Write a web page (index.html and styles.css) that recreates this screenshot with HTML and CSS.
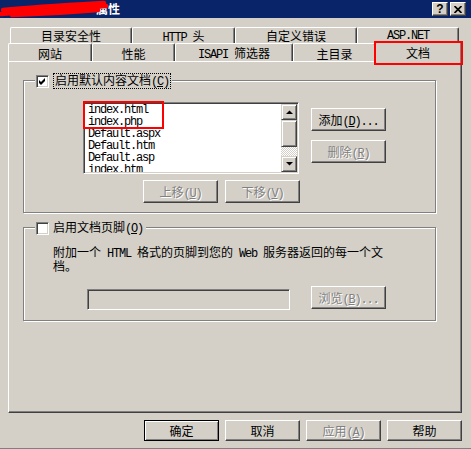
FILE: index.html
```html
<!DOCTYPE html>
<html lang="zh-CN">
<head>
<meta charset="utf-8">
<title>属性</title>
<link rel="stylesheet" href="styles.css">
</head>
<body>
<div class="window">
  <div class="titlebar">
    <span class="title">属性</span>
    <svg class="scribble" width="120" height="18" viewBox="0 0 120 18">
      <path d="M1 14 C 30 12, 65 9, 106 6"/>
      <path d="M3 10 C 35 7, 70 5, 104 3"/>
      <path d="M12 15 C 45 14, 75 12, 98 10"/>
    </svg>
    <div class="caption-btns">
      <span class="cap-btn">?</span>
      <span class="cap-btn"><svg width="8" height="7" viewBox="0 0 8 7"><path d="M0.5 0 L7.5 7 M7.5 0 L0.5 7"/></svg></span>
    </div>
  </div>

  <div class="tabrow tabrow-back">
    <div class="tab t-dir"><span>目录安全性</span></div>
    <div class="tab t-http"><span><span class="m">HTTP </span>头</span></div>
    <div class="tab t-err"><span>自定义错误</span></div>
    <div class="tab t-asp"><span class="m">ASP.NET</span></div>
  </div>
  <div class="tabrow tabrow-front">
    <div class="tab t-site"><span>网站</span></div>
    <div class="tab t-perf"><span>性能</span></div>
    <div class="tab t-isapi"><span><span class="m">ISAPI </span>筛选器</span></div>
    <div class="tab t-home"><span>主目录</span></div>
    <div class="tab tab-active t-doc"><span>文档</span><span class="mark mark-tab"></span></div>
  </div>

  <div class="panel">
    <div class="group group-1">
      <div class="legend">
        <span class="check"><svg width="7" height="7" viewBox="0 0 7 7"><polygon points="0,2 2,4 6,0 6,3 2,7 0,5"/></svg></span>
        <span class="label focus">启用默认内容文档<span class="m">(<u>C</u>)</span></span>
      </div>
      <div class="g1-body">
        <div class="list-col">
          <div class="listbox">
            <div class="items">
              <div>index.html</div>
              <div>index.php</div>
              <div>Default.aspx</div>
              <div>Default.htm</div>
              <div>Default.asp</div>
              <div>index.htm</div>
            </div>
            <div class="scrollbar">
              <div class="sb-btn"><svg width="7" height="4" viewBox="0 0 7 4"><polygon points="0,4 3.5,0.5 7,4"/></svg></div>
              <div class="sb-thumb"></div>
              <div class="sb-track"></div>
              <div class="sb-btn"><svg width="7" height="4" viewBox="0 0 7 4"><polygon points="0,0 7,0 3.5,3.5"/></svg></div>
            </div>
            <span class="mark mark-list"></span>
          </div>
          <div class="move-row">
            <div class="btn disabled"><span>上移<span class="m">(<u>U</u>)</span></span></div>
            <div class="btn disabled"><span>下移<span class="m">(<u>V</u>)</span></span></div>
          </div>
        </div>
        <div class="side-col">
          <div class="btn"><span>添加<span class="m">(<u>D</u>)...</span></span></div>
          <div class="btn disabled"><span>删除<span class="m">(<u>R</u>)</span></span></div>
        </div>
      </div>
    </div>

    <div class="group group-2">
      <div class="legend legend-2">
        <span class="check"></span>
        <span class="label">启用文档页脚<span class="m">(<u>O</u>)</span></span>
      </div>
      <p class="desc">附加一个<span class="m"> HTML </span>格式的页脚到您的<span class="m"> Web </span>服务器返回的每一个文档。</p>
      <div class="input-row">
        <div class="input"></div>
        <div class="btn disabled browse"><span>浏览<span class="m">(<u>B</u>)...</span></span></div>
      </div>
    </div>
  </div>

  <div class="footer">
    <div class="btn btn-default"><span>确定</span></div>
    <div class="btn"><span>取消</span></div>
    <div class="btn disabled"><span>应用<span class="m">(<u>A</u>)</span></span></div>
    <div class="btn"><span>帮助</span></div>
  </div>
</div>
</body>
</html>
```

FILE: styles.css
```css
* { box-sizing: border-box; }
html, body { margin: 0; padding: 0; }
body {
  background: #d4d0c8;
  font-family: "Noto Sans CJK SC", sans-serif;
  font-size: 12px;
  color: #000;
}
.window {
  width: 471px;
  height: 449px;
  background: #d4d0c8;
  border-bottom: 1px solid #808080;
  display: flex;
  flex-direction: column;
  overflow: hidden;
}
.m {
  font-family: "Liberation Mono", monospace;
  font-size: 12px;
  letter-spacing: -1.2px;
}

/* title bar */
.titlebar {
  position: relative;
  flex: none;
  height: 18px;
  background: #0a246a;
  display: flex;
  align-items: center;
}
.title {
  padding-left: 96px;
  color: #fff;
  font-weight: bold;
  line-height: 18px;
}
.scribble { position: absolute; left: 0; top: 0; }
.scribble path { fill: none; stroke: #f00; stroke-width: 4.5; stroke-linecap: round; }
.caption-btns {
  margin-left: auto;
  margin-right: 5px;
  display: flex;
  gap: 2px;
}
.cap-btn {
  width: 16px;
  height: 14px;
  background: #d4d0c8;
  border: 1px solid;
  border-color: #fff #404040 #404040 #fff;
  box-shadow: inset -1px -1px #808080;
  display: flex;
  align-items: center;
  justify-content: center;
  font: bold 12px "Liberation Sans", sans-serif;
  line-height: 1;
}
.cap-btn path { stroke: #000; stroke-width: 1.7; }

/* tabs */
.tabrow { display: flex; flex: none; }
.tabrow-back { margin: 9px 0 0 10px; height: 16px; }
.tabrow-front { margin-left: 8px; height: 18px; align-items: flex-end; }
.tab {
  flex: none;
  height: 100%;
  display: flex;
  align-items: center;
  justify-content: center;
  white-space: pre;
  background: #d4d0c8;
  border-top: 1px solid #fff;
  border-left: 1px solid #fff;
  border-right: 1px solid #404040;
  box-shadow: inset -1px 0 #808080;
  border-radius: 2px 2px 0 0;
}
.tabrow-front .tab { height: 18px; padding-top: 1px; }
.tabrow-front .tab-active {
  height: 21px;
  margin: 0 -2px -1px;
  position: relative;
  z-index: 2;
  padding-top: 0;
}
.t-dir { width: 122px; }
.t-http { width: 103px; }
.t-err { width: 122px; }
.t-asp { width: 102px; }
.t-site { width: 84px; }
.t-perf { width: 83px; }
.t-isapi { width: 118px; }
.t-home { width: 83px; }
.t-doc { width: 88px; }

.mark { position: absolute; border: 2px solid #f00; pointer-events: none; }
.mark-tab { left: -1px; top: -1px; width: 89px; height: 24px; }
.mark-list { left: -1px; top: -2px; width: 81px; height: 28px; }

/* panel */
.panel {
  flex: none;
  margin-left: 8px;
  width: 454px;
  height: 352px;
  background: #d4d0c8;
  border-top: 1px solid #fff;
  border-left: 1px solid #fff;
  border-right: 1px solid #404040;
  border-bottom: 1px solid #404040;
  box-shadow: inset -1px -1px #808080;
  padding: 18px 0 0 14px;
}
.group {
  width: 413px;
  border: 1px solid #808080;
  box-shadow: inset 1px 1px #fff, 1px 1px #fff;
}
.group-1 { height: 133px; }
.group-2 { height: 94px; margin-top: 14px; }
.legend {
  display: flex;
  align-items: center;
  width: fit-content;
  height: 14px;
  margin: -7px 0 0 11px;
  padding: 0 1px;
  background: #d4d0c8;
}
.legend-2 { padding-right: 3px; }
.check {
  flex: none;
  width: 13px;
  height: 13px;
  background: #fff;
  border: 1px solid;
  border-color: #808080 #fff #fff #808080;
  box-shadow: inset 1px 1px #404040, inset -1px -1px #d4d0c8;
  display: flex;
  align-items: center;
  justify-content: center;
}
.label { margin-left: 4px; line-height: 12px; white-space: nowrap; }
.label.focus { border: 1px dotted #000; padding: 0 1px; }

.g1-body { display: flex; margin: 14px 0 0 59px; }
.list-col { width: 216px; flex: none; }
.listbox {
  position: relative;
  height: 72px;
  background: #fff;
  border: 1px solid;
  border-color: #808080 #fff #fff #808080;
  box-shadow: inset 1px 1px #404040, inset -1px -1px #d4d0c8;
  padding: 1px;
  display: flex;
}
.items {
  flex: 1;
  overflow: hidden;
  padding-left: 3px;
  font-family: "Liberation Mono", monospace;
  font-size: 12px;
  letter-spacing: -1.2px;
  line-height: 12px;
}
.scrollbar { width: 16px; flex: none; display: flex; flex-direction: column; }
.sb-btn, .sb-thumb {
  flex: none;
  background: #d4d0c8;
  border: 1px solid;
  border-color: #d4d0c8 #404040 #404040 #d4d0c8;
  box-shadow: inset 1px 1px #fff, inset -1px -1px #808080;
}
.sb-btn { height: 16px; display: flex; align-items: center; justify-content: center; }
.sb-thumb { height: 27px; }
.sb-track {
  flex: 1;
  background-image: conic-gradient(#fff 25%, #d4d0c8 0 50%, #fff 0 75%, #d4d0c8 0);
  background-size: 2px 2px;
}
.move-row { display: flex; gap: 7px; margin: 6px 0 0 60px; }
.side-col { display: flex; flex-direction: column; gap: 9px; margin: 6px 0 0 12px; }

.btn {
  flex: none;
  width: 75px;
  height: 23px;
  display: flex;
  align-items: center;
  justify-content: center;
  white-space: pre;
  background: #d4d0c8;
  border: 1px solid;
  border-color: #fff #404040 #404040 #fff;
  box-shadow: inset -1px -1px #808080;
}
.btn.disabled { color: #808080; text-shadow: 1px 1px #fff; }
.btn-default {
  border-color: #000;
  box-shadow: inset 1px 1px #fff, inset -1px -1px #808080;
}

.desc { margin: 11px 0 0 29px; width: 336px; line-height: 12px; }
.input-row { display: flex; align-items: flex-start; margin: 14px 0 0 63px; }
.input {
  width: 203px;
  height: 21px;
  margin-top: 3px;
  background: #d4d0c8;
  border: 1px solid;
  border-color: #808080 #fff #fff #808080;
  box-shadow: inset 1px 1px #404040, inset -1px -1px #d4d0c8;
}
.browse { margin-left: 21px; }

.footer {
  flex: none;
  display: flex;
  justify-content: flex-end;
  gap: 6px;
  margin-top: 7px;
  padding-right: 9px;
}
.footer .btn { height: 21px; }
```
